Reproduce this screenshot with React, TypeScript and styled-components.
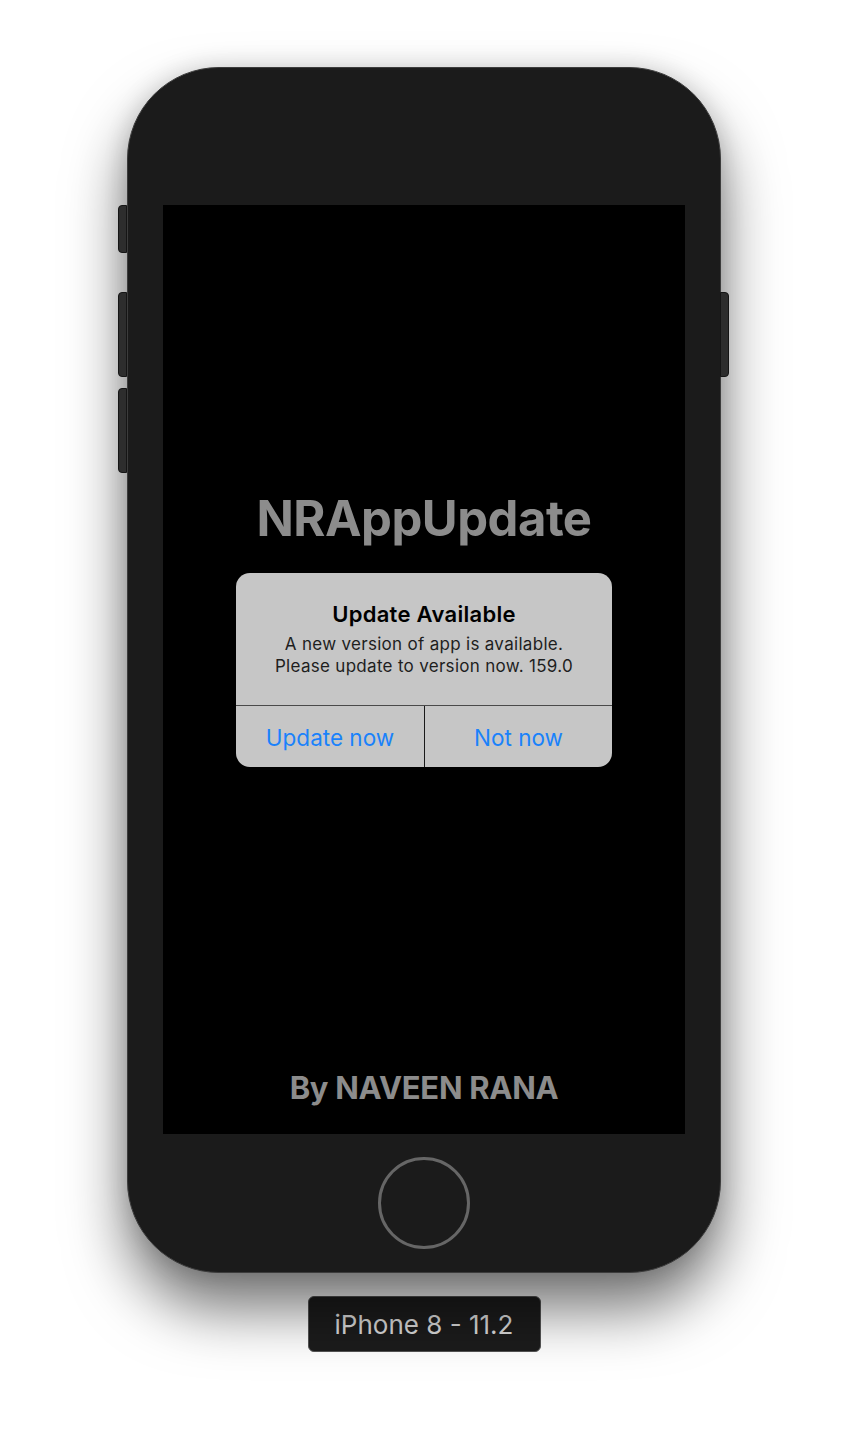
import React from "react";
import styled, { createGlobalStyle } from "styled-components";

const Global = createGlobalStyle`
  html, body { margin: 0; padding: 0; background: #ffffff; }
  body { font-family: Inter, "Noto Sans", sans-serif; -webkit-font-smoothing: antialiased; }
`;

const Page = styled.div`
  width: 848px;
  height: 1436px;
  display: flex;
  flex-direction: column;
  align-items: center;
  padding-top: 67px;
  box-sizing: border-box;
  overflow: hidden;
`;

const Phone = styled.div`
  position: relative;
  width: 594px;
  height: 1206px;
  box-sizing: border-box;
  border-radius: 92px;
  background: #1b1b1b;
  border: 1px solid #3c3c3c;
  box-shadow: 0 36px 60px rgba(0, 0, 0, 0.55), 0 0 24px rgba(0, 0, 0, 0.14);
  display: flex;
  flex-direction: column;
  align-items: center;
  padding-top: 137px;
`;

const SideButton = styled.div<{ $side: "left" | "right"; $top: number; $h: number }>`
  position: absolute;
  top: ${(p) => p.$top}px;
  ${(p) => (p.$side === "left" ? "left: -10px;" : "right: -9px;")}
  width: 9px;
  height: ${(p) => p.$h}px;
  background: #2d2d2d;
  border: 1px solid #151515;
  border-radius: ${(p) => (p.$side === "left" ? "4px 0 0 4px" : "0 4px 4px 0")};
  box-sizing: border-box;
`;

const Screen = styled.div`
  width: 522px;
  height: 929px;
  background: #000000;
  display: flex;
  flex-direction: column;
  align-items: center;
  box-sizing: border-box;
  padding-top: 284px;
`;

const AppTitle = styled.h1`
  margin: 0;
  font-family: Inter, "Noto Sans", sans-serif;
  font-weight: 700;
  font-size: 49px;
  line-height: 60px;
  letter-spacing: -0.5px;
  color: #8c8c8c;
`;

const Alert = styled.div`
  margin-top: 24px;
  width: 376px;
  border-radius: 14px;
  background: #c6c6c6;
  overflow: hidden;
  display: flex;
  flex-direction: column;
`;

const AlertBody = styled.div`
  height: 133px;
  box-sizing: border-box;
  padding-top: 27px;
  text-align: center;
  border-bottom: 1px solid #4a4a4a;
`;

const AlertTitle = styled.div`
  font-family: Inter, "Noto Sans", sans-serif;
  font-weight: 600;
  font-size: 22px;
  line-height: 28px;
  color: #000000;
  letter-spacing: 0.3px;
`;

const AlertMessage = styled.div`
  margin-top: 5px;
  font-family: Inter, "Noto Sans", sans-serif;
  font-size: 17px;
  line-height: 22px;
  color: #1e1e1e;
  letter-spacing: 0.3px;
`;

const Actions = styled.div`
  display: grid;
  grid-template-columns: 188px 1fr;
  height: 61px;
`;

const ActionButton = styled.button<{ $divider?: boolean }>`
  appearance: none;
  border: none;
  background: transparent;
  margin: 0;
  padding: 2px 0 0;
  font-family: Inter, "Noto Sans", sans-serif;
  font-size: 22.5px;
  color: #1a82fb;
  letter-spacing: 0px;
  border-left: ${(p) => (p.$divider ? "1px solid #1a1a1a" : "none")};
  display: flex;
  align-items: center;
  justify-content: center;
`;

const Spacer = styled.div`
  flex: 1;
`;

const Footer = styled.div`
  font-family: Inter, "Noto Sans", sans-serif;
  font-weight: 700;
  font-size: 31px;
  line-height: 36px;
  letter-spacing: -0.3px;
  color: #8c8c8c;
  margin-bottom: 28px;
`;

const Bezel = styled.div`
  flex: 1;
  display: flex;
  align-items: center;
  justify-content: center;
`;

const HomeButton = styled.div`
  width: 92px;
  height: 92px;
  box-sizing: border-box;
  border-radius: 50%;
  border: 3.5px solid #666666;
`;

const DeviceLabel = styled.div`
  margin-top: 23px;
  width: 233px;
  height: 56px;
  box-sizing: border-box;
  border-radius: 6px;
  background: #1c1c1c;
  border: 1px solid #555555;
  display: flex;
  align-items: center;
  justify-content: center;
  font-family: Inter, "Noto Sans", sans-serif;
  font-size: 26px;
  color: #dedede;
  letter-spacing: 0px;
`;

export default function App() {
  return (
    <>
      <Global />
      <Page>
        <Phone>
          <SideButton $side="left" $top={137} $h={48} />
          <SideButton $side="left" $top={224} $h={85} />
          <SideButton $side="left" $top={320} $h={85} />
          <SideButton $side="right" $top={224} $h={85} />
          <Screen>
            <AppTitle>NRAppUpdate</AppTitle>
            <Alert>
              <AlertBody>
                <AlertTitle>Update Available</AlertTitle>
                <AlertMessage>
                  A new version of app is available.
                  <br />
                  Please update to version now. 159.0
                </AlertMessage>
              </AlertBody>
              <Actions>
                <ActionButton>Update now</ActionButton>
                <ActionButton $divider>Not now</ActionButton>
              </Actions>
            </Alert>
            <Spacer />
            <Footer>By NAVEEN RANA</Footer>
          </Screen>
          <Bezel>
            <HomeButton />
          </Bezel>
        </Phone>
        <DeviceLabel>iPhone 8 - 11.2</DeviceLabel>
      </Page>
    </>
  );
}
